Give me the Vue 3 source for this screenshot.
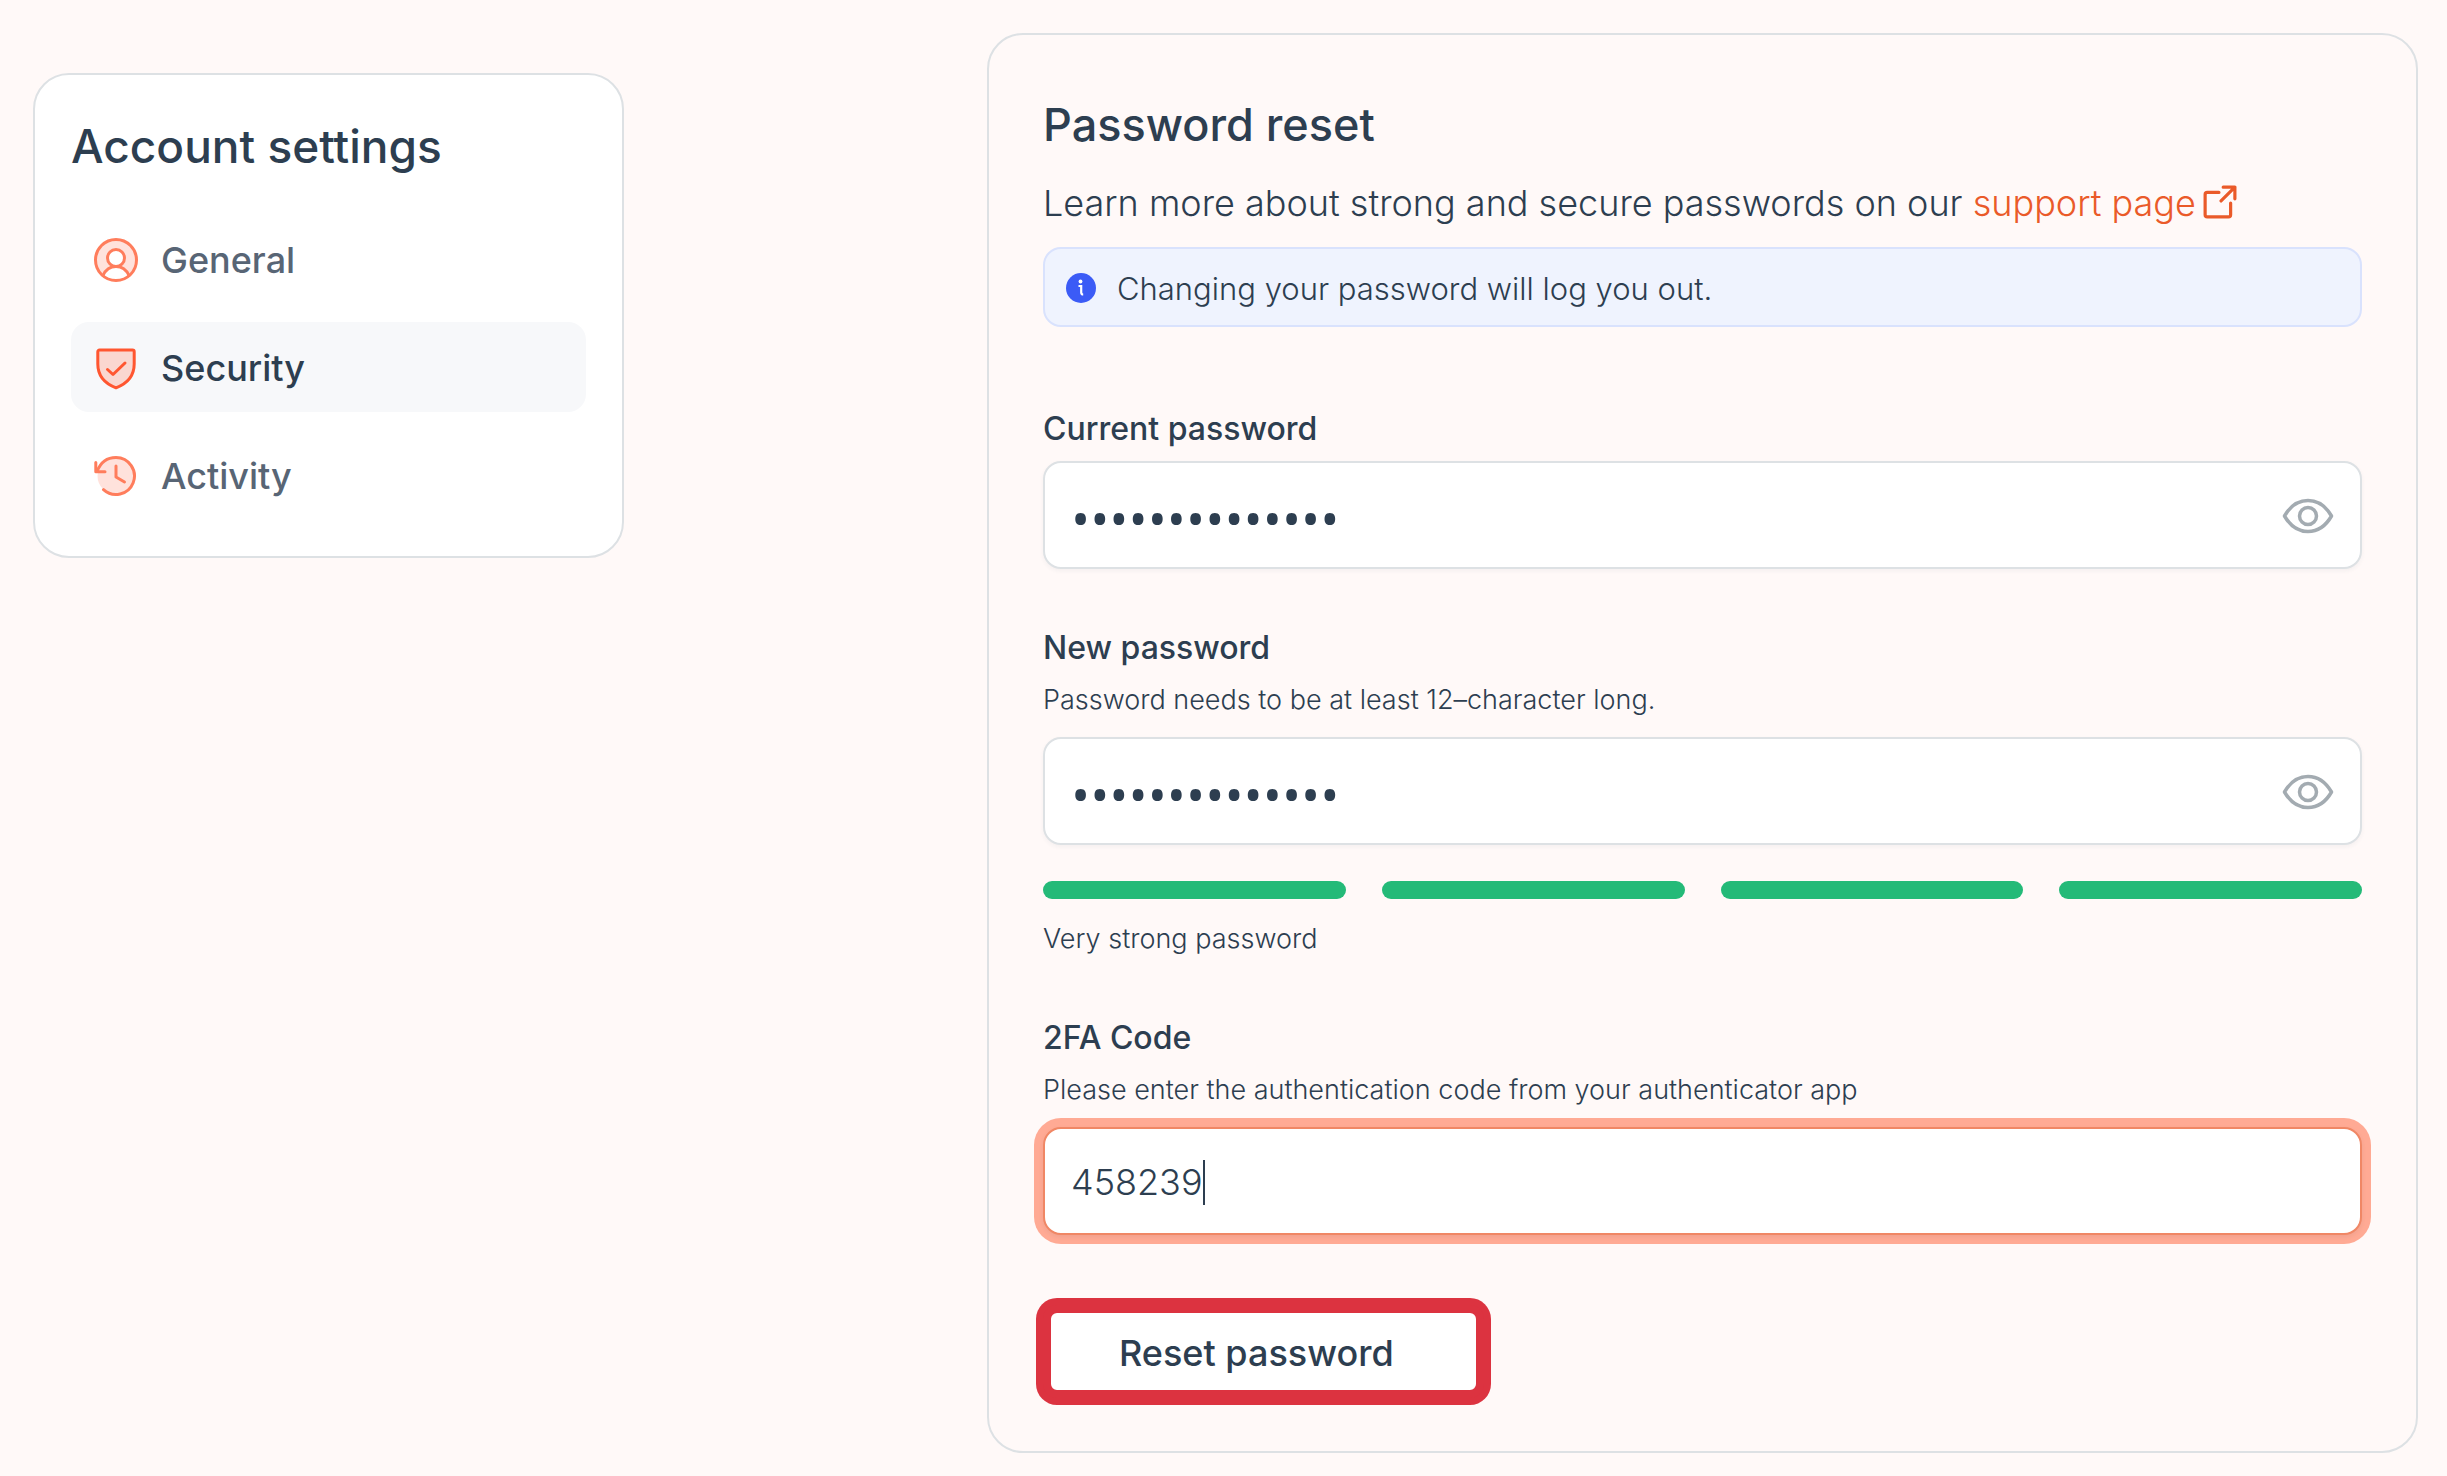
<script setup>
import { ref } from 'vue'

const sections = [
  { id: 'general', label: 'General' },
  { id: 'security', label: 'Security' },
  { id: 'activity', label: 'Activity' },
]
const active = ref('security')
const currentPassword = ref('correct-horse1')
const newPassword = ref('battery-staple')
const showCurrent = ref(false)
const showNew = ref(false)
const code = ref('458239')
</script>

<template>
  <div class="page">
    <aside class="sidebar">
      <h2 class="title">Account settings</h2>
      <nav class="nav">
        <a
          v-for="s in sections"
          :key="s.id"
          :href="'#' + s.id"
          class="nav-item"
          :class="{ active: active === s.id }"
          @click.prevent="active = s.id"
        >
          <svg v-if="s.id === 'general'" class="nav-icon" viewBox="0 0 44 44">
            <path class="tint" fill-rule="evenodd" d="M22 2a20 20 0 0 1 13.500 34.500C33 31.500 28 28.500 22 28.500S11 31.500 8.500 36.500A20 20 0 0 1 22 2zM22 11.500a8.500 8.500 0 1 0 0 17a8.500 8.500 0 0 0 0-17z" />
            <circle cx="22" cy="22" r="20.500" />
            <circle cx="22" cy="20" r="8.500" />
            <path d="M9 37.500C11.500 32 16.500 28.500 22 28.500S32.500 32 35 37.500" />
          </svg>
          <svg v-else-if="s.id === 'security'" class="nav-icon" viewBox="0 0 44 44">
            <path class="tint" d="M4 4h36v16c0 12-9 19-18 22C13 39 4 32 4 20z" />
            <path d="M5.500 4h33a1.700 1.700 0 0 1 1.700 1.700V18c0 14-9.500 20.500-18.200 23.800C13.300 38.500 3.800 32 3.800 18V5.700A1.700 1.700 0 0 1 5.500 4z" />
            <path d="M13.500 23.500l5.500 5L31 17" />
          </svg>
          <svg v-else class="nav-icon" viewBox="0 0 44 44">
            <circle class="tint" cx="22" cy="22" r="18.500" />
            <path d="M3 17.500C6.500 8.500 13 3.500 22 3.500A18.500 18.500 0 1 1 9.500 35.700" />
            <path d="M1.800 8.500v9.200h9.200M22 12v11l8.500 5" />
          </svg>
          {{ s.label }}
        </a>
      </nav>
    </aside>

    <main class="card">
      <h1 class="title">Password reset</h1>
      <p class="intro">
        Learn more about strong and secure passwords on our
        <a href="#support" class="support">support page<svg class="external" viewBox="0 0 32 32"><path d="M15 7H4a2 2 0 0 0-2 2v19a2 2 0 0 0 2 2h20a2 2 0 0 0 2-2V17M17 15L30 2M19 2h11v11" /></svg></a>
      </p>
      <div class="notice" role="status">
        <svg class="info" viewBox="0 0 30 30">
          <circle cx="15" cy="15" r="15" fill="#3b5bf6" />
          <circle cx="14.500" cy="8.500" r="1.900" fill="#fff" />
          <path d="M12.500 13h2.700v6.500q0 2 2 2" fill="none" stroke="#fff" stroke-width="2.200" />
        </svg>
        <span>Changing your password will log you out.</span>
      </div>

      <form @submit.prevent>
        <div class="field first">
          <label for="current">Current password</label>
          <div class="box">
            <input id="current" v-model="currentPassword" :type="showCurrent ? 'text' : 'password'" />
            <button type="button" class="eye" aria-label="Show current password" @click="showCurrent = !showCurrent">
              <svg viewBox="0 0 52 36"><path d="M2.500 18C8 8.500 16 2.500 26 2.500S44 8.500 49.500 18C44 27.500 36 33.500 26 33.500S8 27.500 2.500 18z" /><circle cx="26" cy="18" r="8.500" /></svg>
            </button>
          </div>
        </div>

        <div class="field">
          <label for="new">New password</label>
          <p id="new-help" class="help">Password needs to be at least 12–character long.</p>
          <div class="box">
            <input id="new" v-model="newPassword" :type="showNew ? 'text' : 'password'" aria-describedby="new-help" />
            <button type="button" class="eye" aria-label="Show new password" @click="showNew = !showNew">
              <svg viewBox="0 0 52 36"><path d="M2.500 18C8 8.500 16 2.500 26 2.500S44 8.500 49.500 18C44 27.500 36 33.500 26 33.500S8 27.500 2.500 18z" /><circle cx="26" cy="18" r="8.500" /></svg>
            </button>
          </div>
          <div class="strength"><span v-for="n in 4" :key="n" /></div>
          <p class="verdict">Very strong password</p>
        </div>

        <div class="field">
          <label for="code">2FA Code</label>
          <p id="code-help" class="help">Please enter the authentication code from your authenticator app</p>
          <div class="box focused">
            <input id="code" v-model="code" type="text" inputmode="numeric" aria-describedby="code-help" />
            <span class="caret" />
          </div>
        </div>

        <button type="submit" class="submit">Reset password</button>
      </form>
    </main>
  </div>
</template>

<style>
body {
  margin: 0;
  background: #fff9f8;
}
</style>

<style scoped>
* {
  box-sizing: border-box;
}
.page {
  display: grid;
  grid-template-columns: minmax(0, 591fr) minmax(0, 1431fr);
  column-gap: 363px;
  align-items: start;
  padding: 33px 29px 23px 33px;
  font-family: Inter, 'Noto Sans', sans-serif;
  color: #2d3e50;
}
.title {
  margin: 0;
  font-size: 45px;
  line-height: 56px;
  font-weight: 500;
}
.sidebar {
  margin-top: 40px;
  padding: 43px 36px 36px;
  border: 2px solid #dde1e4;
  border-radius: 36px;
  background: #fff;
}
.sidebar .title {
  font-size: 46px;
}
.nav {
  display: flex;
  flex-direction: column;
  gap: 18px;
  margin-top: 40px;
}
.nav-item {
  display: flex;
  align-items: center;
  gap: 23px;
  height: 90px;
  padding: 2px 23px 0;
  border-radius: 18px;
  font-size: 36px;
  font-weight: 500;
  color: #586575;
  text-decoration: none;
}
.nav-item.active {
  background: #f7f8fa;
  color: #2d3e50;
}
.nav-icon {
  width: 44px;
  height: 44px;
  fill: none;
  stroke: #ff7d5c;
  stroke-width: 3;
  stroke-linecap: round;
  stroke-linejoin: round;
}
.active .nav-icon {
  stroke: #ff5630;
}
.nav-icon .tint {
  fill: #ffe2dc;
  stroke: none;
}
.active .nav-icon .tint {
  fill: #fad7d0;
}
.card {
  padding: 62px 54px 53px;
  border: 2px solid #dde1e4;
  border-radius: 36px;
}
.intro {
  margin: 23px 0 17px;
  font-size: 36px;
  line-height: 54px;
  font-weight: 300;
}
.support {
  color: #ea5a29;
  text-decoration: none;
}
.external {
  width: 34px;
  height: 34px;
  margin-left: 7px;
  vertical-align: -3px;
  fill: none;
  stroke: currentColor;
  stroke-width: 3;
  stroke-linecap: round;
  stroke-linejoin: round;
}
.notice {
  display: flex;
  align-items: center;
  gap: 21px;
  height: 80px;
  padding: 2px 21px 0;
  border: 2px solid #d9e2fd;
  border-radius: 18px;
  background: #eff3fe;
  font-size: 31px;
  font-weight: 300;
}
.info {
  width: 30px;
  height: 30px;
}
.field {
  display: flex;
  flex-direction: column;
  margin-top: 59px;
}
.field.first {
  margin-top: 82px;
}
label {
  margin-bottom: 12px;
  font-size: 32px;
  line-height: 40px;
  font-weight: 500;
}
.help,
.verdict {
  margin: 0;
  font-size: 27px;
  line-height: 40px;
  font-weight: 300;
}
.help {
  margin-bottom: 17px;
}
.verdict {
  margin-top: 20px;
}
.box {
  position: relative;
  display: flex;
  align-items: center;
  height: 108px;
  padding: 2px 26px 0;
  border: 2px solid #dde1e4;
  border-radius: 18px;
  background: #fff;
  box-shadow: 0 2px 4px rgba(45, 62, 80, 0.05);
}
.box.focused {
  border-color: #f08765;
  box-shadow: 0 2px 4px rgba(45, 62, 80, 0.08), 0 0 0 9px #ffaa94;
}
.box input {
  flex: 1;
  min-width: 0;
  height: 100%;
  padding: 0;
  border: 0;
  outline: 0;
  background: none;
  font-family: inherit;
  font-size: 36px;
  font-weight: 300;
  color: inherit;
}
.box input[type='password'] {
  padding-top: 4px;
  font-family: 'Open Sans', sans-serif;
  font-size: 51px;
  font-weight: 400;
}
.caret {
  position: absolute;
  left: 158px;
  width: 2px;
  height: 45px;
  background: #2d3e50;
}
.eye {
  display: flex;
  padding: 0;
  border: 0;
  background: none;
  cursor: pointer;
}
.eye svg {
  width: 52px;
  height: 36px;
  fill: none;
  stroke: #a3abb1;
  stroke-width: 3.500;
  stroke-linejoin: round;
}
.strength {
  display: grid;
  grid-template-columns: repeat(4, 1fr);
  gap: 36px;
  margin-top: 36px;
}
.strength span {
  height: 18px;
  border-radius: 9px;
  background: #24ba78;
}
.submit {
  display: block;
  min-width: 441px;
  height: 93px;
  margin-top: 70px;
  padding: 2px 68px 0;
  border: 8px solid #dc3340;
  border-radius: 14px;
  background: #fff;
  box-shadow: 0 0 0 7px #dc3340;
  font-family: inherit;
  font-size: 36px;
  font-weight: 500;
  text-align: left;
  color: inherit;
  cursor: pointer;
}
@media (max-width: 1600px) {
  .page {
    grid-template-columns: minmax(0, 1fr);
    row-gap: 32px;
  }
}
</style>
